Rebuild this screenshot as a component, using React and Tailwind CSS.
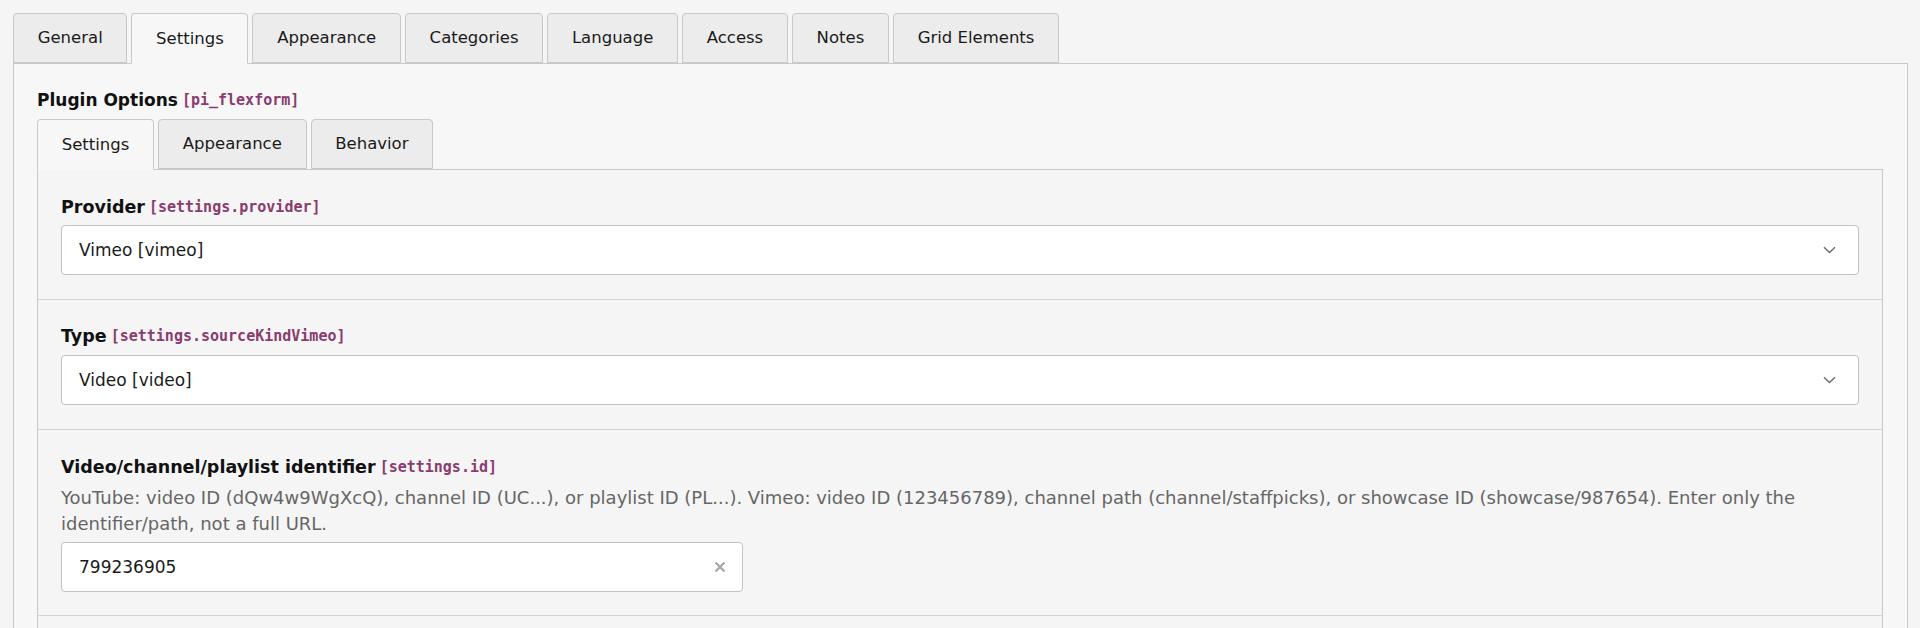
import React from "react";

const outerTabs = ["General", "Settings", "Appearance", "Categories", "Language", "Access", "Notes", "Grid Elements"];
const innerTabs = ["Settings", "Appearance", "Behavior"];

function Tab({ label, active }) {
  return (
    <div
      className={
        "flex items-center px-[23.7px] border border-[#c8c8c8] rounded-t-[4px] text-[#1a1a1a] " +
        (active ? "bg-[#f7f7f7] border-b-[#f7f7f7] relative z-10 h-[51px] -mb-px" : "h-[50px] bg-[#ececec]")
      }
    >
      {label}
    </div>
  );
}

function Code({ children }) {
  return (
    <span className="font-['DejaVu_Sans_Mono',monospace] font-bold text-[15px] text-[#893c6d] ml-1">
      {children}
    </span>
  );
}

function Label({ title, code, size = "text-[17.5px]" }) {
  return (
    <div className="h-6 flex items-center whitespace-nowrap">
      <span className={"font-bold text-[#111] " + size}>{title}</span>
      <Code>{code}</Code>
    </div>
  );
}

function Chevron() {
  return (
    <svg width="13" height="8" viewBox="0 0 13 8" fill="none">
      <path d="M1 1.2l5.5 5.3 5.5-5.3" stroke="#6b6b6b" strokeWidth="1.4" />
    </svg>
  );
}

function Select({ value }) {
  return (
    <div className="h-[50px] bg-white border border-[#c2c2c2] rounded-[4px] flex items-center justify-between pl-[17px] pr-[22px] text-[#1a1a1a] text-[17px]">
      <span>{value}</span>
      <Chevron />
    </div>
  );
}

function ClearIcon() {
  return (
    <svg width="12" height="12" viewBox="0 0 12 12" fill="none">
      <path d="M1.5 1.5l9 9M10.5 1.5l-9 9" stroke="#a9a9a9" strokeWidth="2.4" />
    </svg>
  );
}

export default function App() {
  return (
    <div className="min-h-screen bg-[#f5f5f5] pt-[13px] pl-[13px] pr-[12px] font-['DejaVu_Sans',sans-serif] text-[16.5px] leading-6">
      <div className="flex gap-1 items-end">
        {outerTabs.map((t) => (
          <Tab key={t} label={t} active={t === "Settings"} />
        ))}
      </div>
      <div className="border border-[#c8c8c8] bg-[#f7f7f7] pl-[23px] pr-6 pt-6">
        <Label title="Plugin Options" code="[pi_flexform]" size="text-[17px]" />
        <div className="flex gap-1 items-end mt-[7px]">
          {innerTabs.map((t) => (
            <Tab key={t} label={t} active={t === "Settings"} />
          ))}
        </div>
        <div className="border border-[#c8c8c8] bg-[#f5f5f5]">
          <div className="px-[23px] pt-[25px] pb-6 border-b border-[#d4d4d4]">
            <Label title="Provider" code="[settings.provider]" />
            <div className="mt-[6px]">
              <Select value="Vimeo [vimeo]" />
            </div>
          </div>
          <div className="px-[23px] pt-6 pb-6 border-b border-[#d4d4d4]">
            <Label title="Type" code="[settings.sourceKindVimeo]" />
            <div className="mt-[7px]">
              <Select value="Video [video]" />
            </div>
          </div>
          <div className="px-[23px] pt-[25px] pb-[23px] border-b border-[#d4d4d4]">
            <Label title="Video/channel/playlist identifier" code="[settings.id]" />
            <p className="text-[#666] text-[18px] leading-[26px] mt-[6px]">
              YouTube: video ID (dQw4w9WgXcQ), channel ID (UC...), or playlist ID (PL...). Vimeo: video ID (123456789), channel path (channel/staffpicks), or showcase ID (showcase/987654). Enter only the identifier/path, not a full URL.
            </p>
            <div className="mt-[5px] w-[682px] h-[50px] bg-white border border-[#c2c2c2] rounded-[4px] flex items-center justify-between pl-[17px] pr-4 text-[#1a1a1a] text-[17px]">
              <span>799236905</span>
              <ClearIcon />
            </div>
          </div>
          <div className="h-24" />
        </div>
      </div>
    </div>
  );
}
